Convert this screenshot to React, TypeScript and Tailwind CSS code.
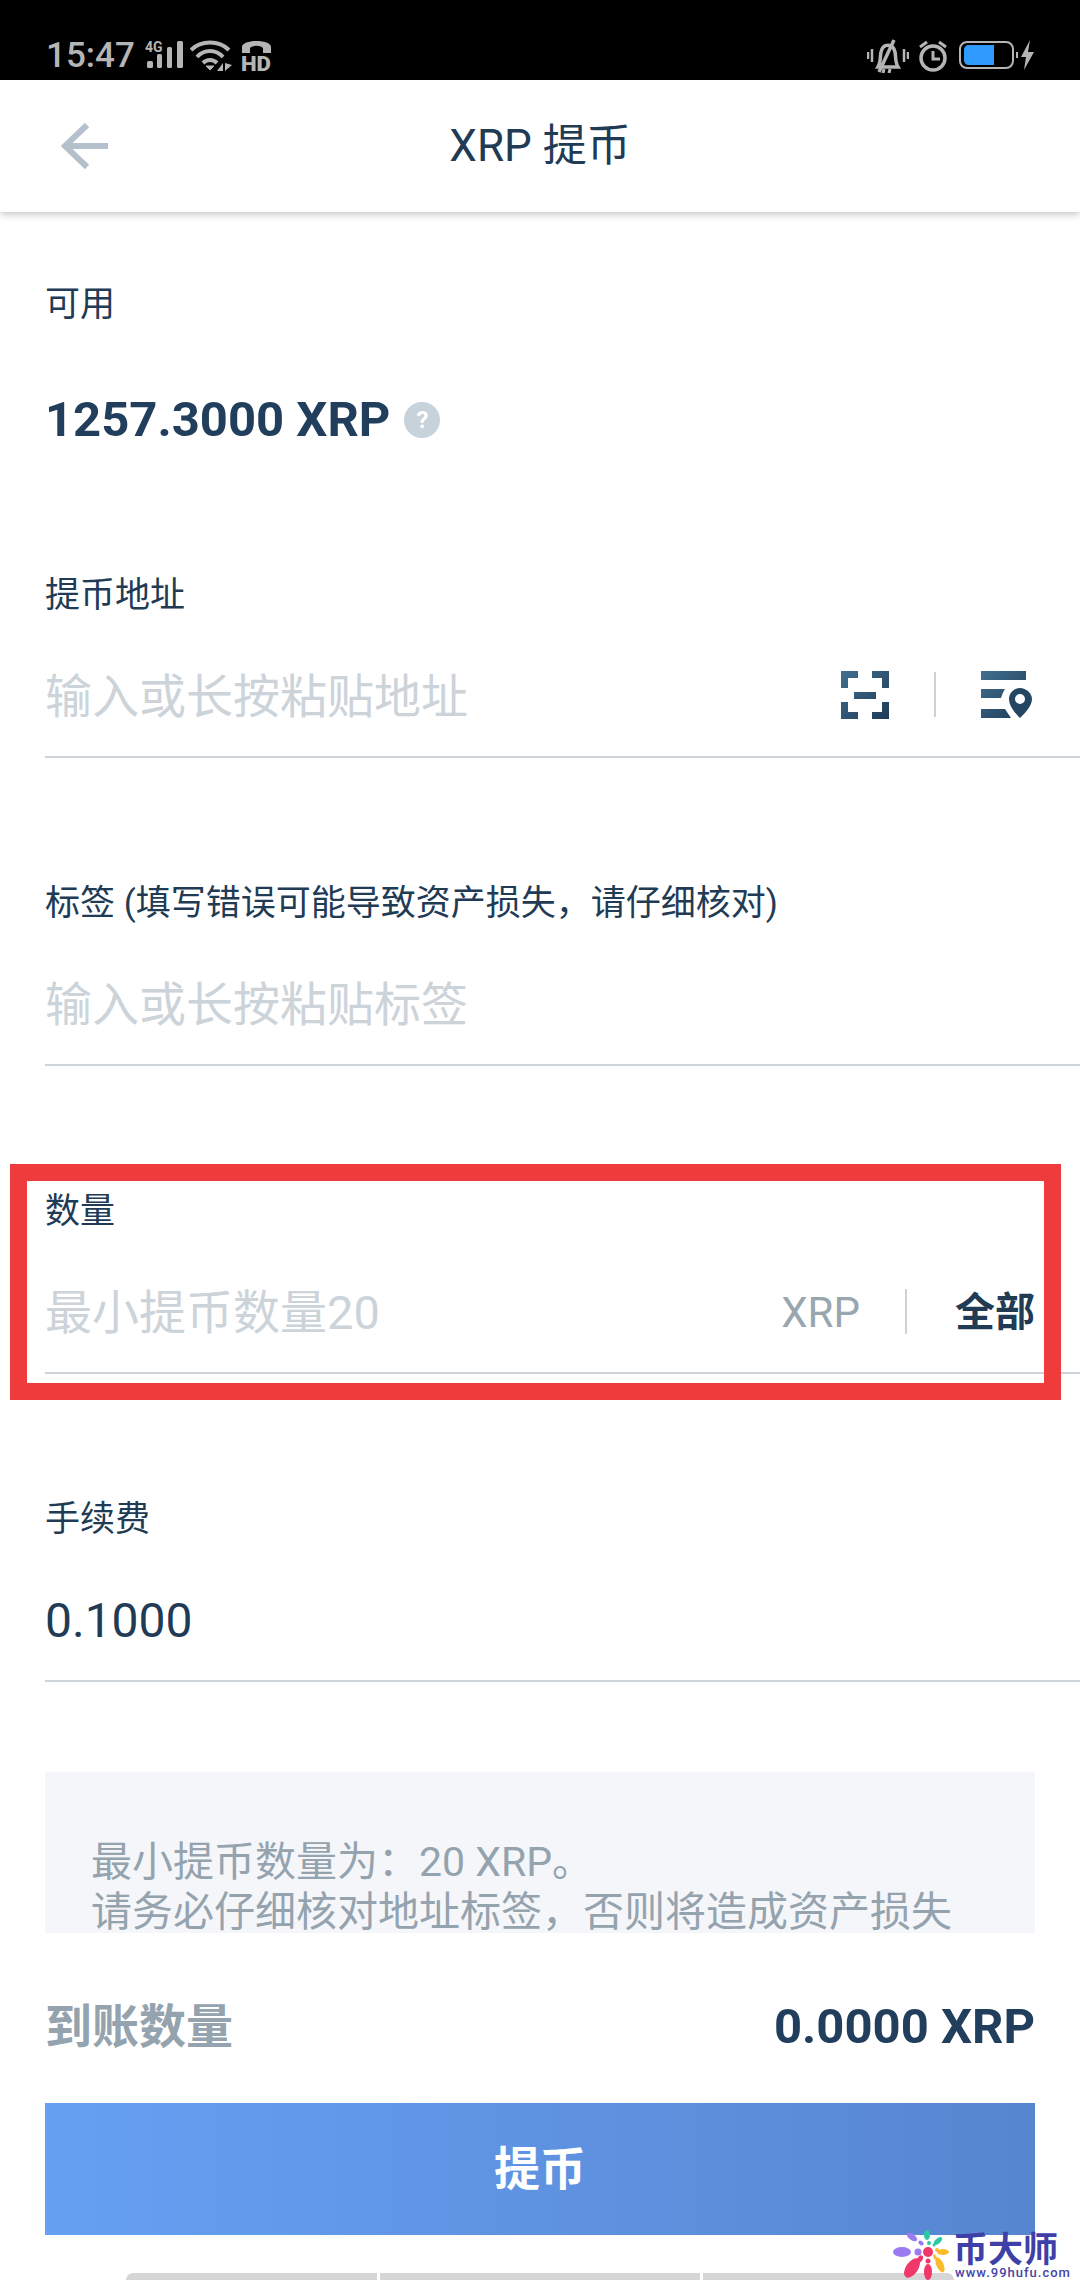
import type { ReactNode } from 'react';

function SignalIcon() {
  return (
    <svg width="40" height="32" viewBox="0 0 40 32" className="ml-[9px]">
      <text x="1" y="12" fill="#b5b5b5" fontSize="14" fontWeight="700" fontFamily="Roboto">4G</text>
      <rect x="3" y="21" width="6" height="7" rx="1.5" fill="#b5b5b5" />
      <rect x="13" y="14" width="5" height="14" rx="1.5" fill="#b5b5b5" />
      <rect x="23" y="7" width="5" height="21" rx="1.5" fill="#b5b5b5" />
      <rect x="33" y="1" width="6" height="27" rx="1.5" fill="#b5b5b5" />
    </svg>
  );
}

function WifiIcon() {
  return (
    <svg width="44" height="32" viewBox="0 0 44 32" className="ml-[6px]" fill="none" stroke="#b5b5b5" strokeWidth="4">
      <path d="M1 10 C11 0 29 0 39 10" />
      <path d="M7 17 C14 9 26 9 33 17" />
      <path d="M13 23 C17 19 23 19 27 23" />
      <path d="M16 26 L20 30 L24 26 Z" fill="#b5b5b5" strokeWidth="1" />
      <path d="M27 31 L33 23 L33 31 Z M35 23 L35 31 L42 25 Z" fill="#b5b5b5" stroke="none" />
    </svg>
  );
}

function HdIcon() {
  return (
    <svg width="32" height="32" viewBox="0 0 32 32" className="ml-[7px]">
      <path d="M1 13 V7 C1 -1 30 -1 30 7 V13 H22 V8 C19 5 12 5 9 8 V13 Z" fill="#b5b5b5" />
      <text x="0" y="31" fill="#b5b5b5" fontSize="21" fontWeight="900" fontFamily="Roboto" textLength="30" lengthAdjust="spacingAndGlyphs">HD</text>
    </svg>
  );
}

function BellOffIcon() {
  return (
    <svg width="42" height="36" viewBox="0 0 42 36" fill="none" stroke="#b5b5b5">
      <path d="M1 14 V21 M5 11 V24 M37 11 V24 M41 14 V21" strokeWidth="2.5" />
      <path d="M11 29 C14 24 13 18 14 14 C16 5 26 5 28 14 C29 19 28 24 31 29 Z" strokeWidth="3.5" />
      <path d="M12 34 L27 2" strokeWidth="3.5" />
      <path d="M17 31 L16 35 M23 31 L22 35" strokeWidth="3" />
    </svg>
  );
}

function AlarmIcon() {
  return (
    <svg width="30" height="32" viewBox="0 0 30 32" fill="none" stroke="#b5b5b5" className="ml-[9px]">
      <circle cx="15" cy="18" r="12" strokeWidth="3.5" />
      <path d="M15 11 V19 H22" strokeWidth="3" />
      <path d="M2 7 L9 2 M28 7 L21 2" strokeWidth="3" />
    </svg>
  );
}

function BatteryIcon() {
  return (
    <svg width="78" height="32" viewBox="0 0 78 32" className="ml-[10px]">
      <rect x="2" y="2" width="53" height="26" rx="7" fill="none" stroke="#b5b5b5" strokeWidth="2" />
      <path d="M11 5 H36 V25 H11 C8 25 6 23 6 20 V10 C6 7 8 5 11 5 Z" fill="#2f9bff" />
      <rect x="58" y="12" width="2" height="6" fill="#b5b5b5" />
      <path d="M72 0 L63 17 H68 L66 30 L76 12 H70 Z" fill="#b5b5b5" />
    </svg>
  );
}

function BackIcon() {
  return (
    <svg width="48" height="48" viewBox="0 0 48 48" fill="none" stroke="#b4c0cb" strokeWidth="6">
      <path d="M47 24 H4" />
      <path d="M26 3 L4 24 L26 45" />
    </svg>
  );
}

function ScanIcon() {
  return (
    <svg width="48" height="48" viewBox="0 0 48 48" className="mb-[4px]">
      <defs>
        <linearGradient id="scanFill" x1="0" y1="0" x2="1" y2="1">
          <stop offset="0" stopColor="#41708f" />
          <stop offset="1" stopColor="#1f3b57" />
        </linearGradient>
      </defs>
      <path
        d="M0 0 H17 V7 H7 V17 H0 Z M31 0 H48 V17 H41 V7 H31 Z M13 21 H35 V28 H13 Z M0 31 H7 V41 H17 V48 H0 Z M41 31 H48 V48 H31 V41 H41 Z"
        fill="url(#scanFill)"
      />
    </svg>
  );
}

function AddressBookIcon() {
  return (
    <svg width="52" height="48" viewBox="0 0 52 48" className="mb-[4px]">
      <defs>
        <linearGradient id="bookFill" x1="0" y1="0" x2="1" y2="1">
          <stop offset="0" stopColor="#41708f" />
          <stop offset="1" stopColor="#1f3b57" />
        </linearGradient>
      </defs>
      <path d="M0 0 H45 V9 H0 Z M0 18 H24 C22 21 21 24 20 27 H0 Z M0 38 H24 C26 41 28 44 30 47 H0 Z" fill="url(#bookFill)" />
      <path
        fillRule="evenodd"
        d="M39 47 C34 42 28 35 28 28 C28 22 33 17 39 17 C45 17 51 22 51 28 C51 35 44 42 39 47 Z M39 23 A5 5 0 1 0 39 33 A5 5 0 1 0 39 23 Z"
        fill="#244663"
      />
    </svg>
  );
}

function FlowerMark() {
  return (
    <svg width="100" height="80" viewBox="0 0 100 80" className="absolute left-0 top-0">
      <circle cx="68" cy="52" r="5" fill="#f0386b" />
      <ellipse cx="42" cy="52" rx="9" ry="5" fill="#9a7cf0" />
      <circle cx="58" cy="52" r="3.5" fill="#9a7cf0" />
      <ellipse cx="52" cy="37" rx="6" ry="3" fill="#9a7cf0" transform="rotate(35 52 37)" />
      <ellipse cx="61" cy="43" rx="3" ry="2" fill="#9a7cf0" transform="rotate(35 61 43)" />
      <ellipse cx="67" cy="35" rx="3" ry="5" fill="#2bc9a4" />
      <circle cx="69" cy="43" r="2" fill="#2bc9a4" />
      <ellipse cx="78" cy="41" rx="5" ry="2.5" fill="#2bc9a4" transform="rotate(-40 78 41)" />
      <circle cx="74" cy="45" r="1.5" fill="#2bc9a4" />
      <ellipse cx="83" cy="52" rx="6" ry="3" fill="#fbbc2c" />
      <circle cx="77" cy="50" r="2" fill="#fbbc2c" />
      <ellipse cx="80" cy="65" rx="3.5" ry="8" fill="#fbbc2c" transform="rotate(-25 80 65)" />
      <ellipse cx="75" cy="57" rx="1.5" ry="3" fill="#fbbc2c" transform="rotate(-25 75 57)" />
      <ellipse cx="52" cy="68" rx="6" ry="11" fill="#f0386b" transform="rotate(35 52 68)" />
      <ellipse cx="60" cy="59" rx="2.5" ry="4" fill="#f0386b" transform="rotate(35 60 59)" />
      <ellipse cx="68" cy="72" rx="4" ry="8" fill="#f0386b" />
      <circle cx="68" cy="61" r="2.5" fill="#f0386b" />
    </svg>
  );
}

function Field({ label, children, className }: { label: string; children: ReactNode; className?: string }) {
  return (
    <div className={className}>
      <div className="h-[44px] pl-[45px] text-[35px] leading-[44px] text-[#213b55]">{label}</div>
      <div className="mt-[19px] ml-[45px] flex h-[119px] items-center">{children}</div>
      <div className="ml-[45px] h-[2px] bg-[#cdd3d8]" />
    </div>
  );
}

function Placeholder({ text }: { text: string }) {
  return <span className="flex-1 text-[47px] leading-[60px] text-[#ccd3d9]">{text}</span>;
}

export default function App() {
  return (
    <div className="relative flex h-[2280px] w-[1080px] flex-col overflow-hidden bg-white font-[Roboto,'Noto_Sans_CJK_SC',sans-serif]">
      {/* status bar */}
      <div className="flex h-[80px] shrink-0 items-center justify-between bg-black pt-[32px] pl-[46px] pr-[44px]">
        <div className="flex items-center">
          <span className="text-[35px] font-medium leading-[40px] text-[#b5b5b5]">15:47</span>
          <SignalIcon />
          <WifiIcon />
          <HdIcon />
        </div>
        <div className="flex items-center">
          <BellOffIcon />
          <AlarmIcon />
          <BatteryIcon />
        </div>
      </div>

      {/* nav */}
      <div className="relative z-10 flex h-[132px] shrink-0 items-center justify-center bg-white shadow-[0_2px_8px_rgba(0,0,0,0.25)]">
        <div className="absolute left-[61px] top-[42px]">
          <BackIcon />
        </div>
        <span className="text-[44px] leading-[60px] text-[#213b55]">XRP 提币</span>
      </div>

      {/* form */}
      <div className="flex-1 overflow-hidden">
        <div className="pl-[45px] pt-[71px]">
          <div className="h-[44px] text-[35px] leading-[44px] text-[#213b55]">可用</div>
          <div className="mt-[63px] flex h-[60px] items-center">
            <span className="text-[49px] font-bold leading-[60px] text-[#213f5c]">1257.3000 XRP</span>
            <span className="ml-[14px] flex h-[36px] w-[36px] items-center justify-center rounded-full bg-[#c8d2da] text-[24px] font-bold leading-none text-white">?</span>
          </div>
        </div>

        <Field label="提币地址" className="mt-[124px]">
          <Placeholder text="输入或长按粘贴地址" />
          <ScanIcon />
          <div className="mx-[45px] mb-[4px] h-[45px] w-[2px] bg-[#ccd2d6]" />
          <div className="mr-[47px]">
            <AddressBookIcon />
          </div>
        </Field>

        <Field label="标签 (填写错误可能导致资产损失，请仔细核对)" className="mt-[124px]">
          <Placeholder text="输入或长按粘贴标签" />
        </Field>

        <Field label="数量" className="mt-[124px]">
          <Placeholder text="最小提币数量20" />
          <span className="text-[42px] leading-[60px] text-[#98a6b0]">XRP</span>
          <div className="mb-[3px] ml-[45px] h-[45px] w-[2px] bg-[#ccd2d6]" />
          <span className="ml-[48px] mr-[45px] text-[40px] font-bold leading-[60px] text-[#213b55]">全部</span>
        </Field>

        <Field label="手续费" className="mt-[124px]">
          <span className="text-[48px] leading-[60px] text-[#213b55]">0.1000</span>
        </Field>

        <div className="mx-[45px] mt-[90px] bg-[#f5f6fa] px-[46px] pb-[60px] pt-[65px] text-[41px] leading-[50px] text-[#94a3ae]">
          <p>最小提币数量为：20 XRP。</p>
          <p>请务必仔细核对地址标签，否则将造成资产损失</p>
        </div>
      </div>

      {/* footer */}
      <div className="h-[347px] shrink-0 bg-white">
        <div className="mx-[45px] mt-[64px] flex h-[60px] items-center justify-between">
          <span className="text-[47px] font-bold leading-[60px] text-[#94a3ae]">到账数量</span>
          <span className="text-[49px] font-bold leading-[60px] text-[#213f5c]">0.0000 XRP</span>
        </div>
        <div className="mx-[45px] mt-[46px] flex h-[132px] items-center justify-center bg-linear-to-r from-[#66a0f3] to-[#5786d0] text-[46px] font-bold text-white">
          提币
        </div>
        <div className="ml-[126px] mt-[38px] flex h-[7px] w-[828px] gap-[3px]">
          <div className="w-[251px] rounded-tl-[7px] bg-[#d6d6d6]" />
          <div className="w-[320px] bg-[#d6d6d6]" />
          <div className="w-[251px] rounded-tr-[7px] bg-[#d6d6d6]" />
        </div>
      </div>

      {/* annotation box drawn over the screenshot */}
      <div className="absolute left-[10px] top-[1164px] h-[236px] w-[1051px] border-[17px] border-[#ef3b3b]" />

      {/* watermark */}
      <div className="absolute left-[860px] top-[2200px] h-[80px] w-[220px]">
        <FlowerMark />
        <div className="absolute left-[93px] top-[34px] text-[35px] font-bold leading-[34px] text-[#3f3fa8]">币大师</div>
        <div className="absolute left-[95px] top-[67px] text-[13px] font-medium leading-[12px] tracking-[1px] text-[#4545a5]">www.99hufu.com</div>
      </div>
    </div>
  );
}
